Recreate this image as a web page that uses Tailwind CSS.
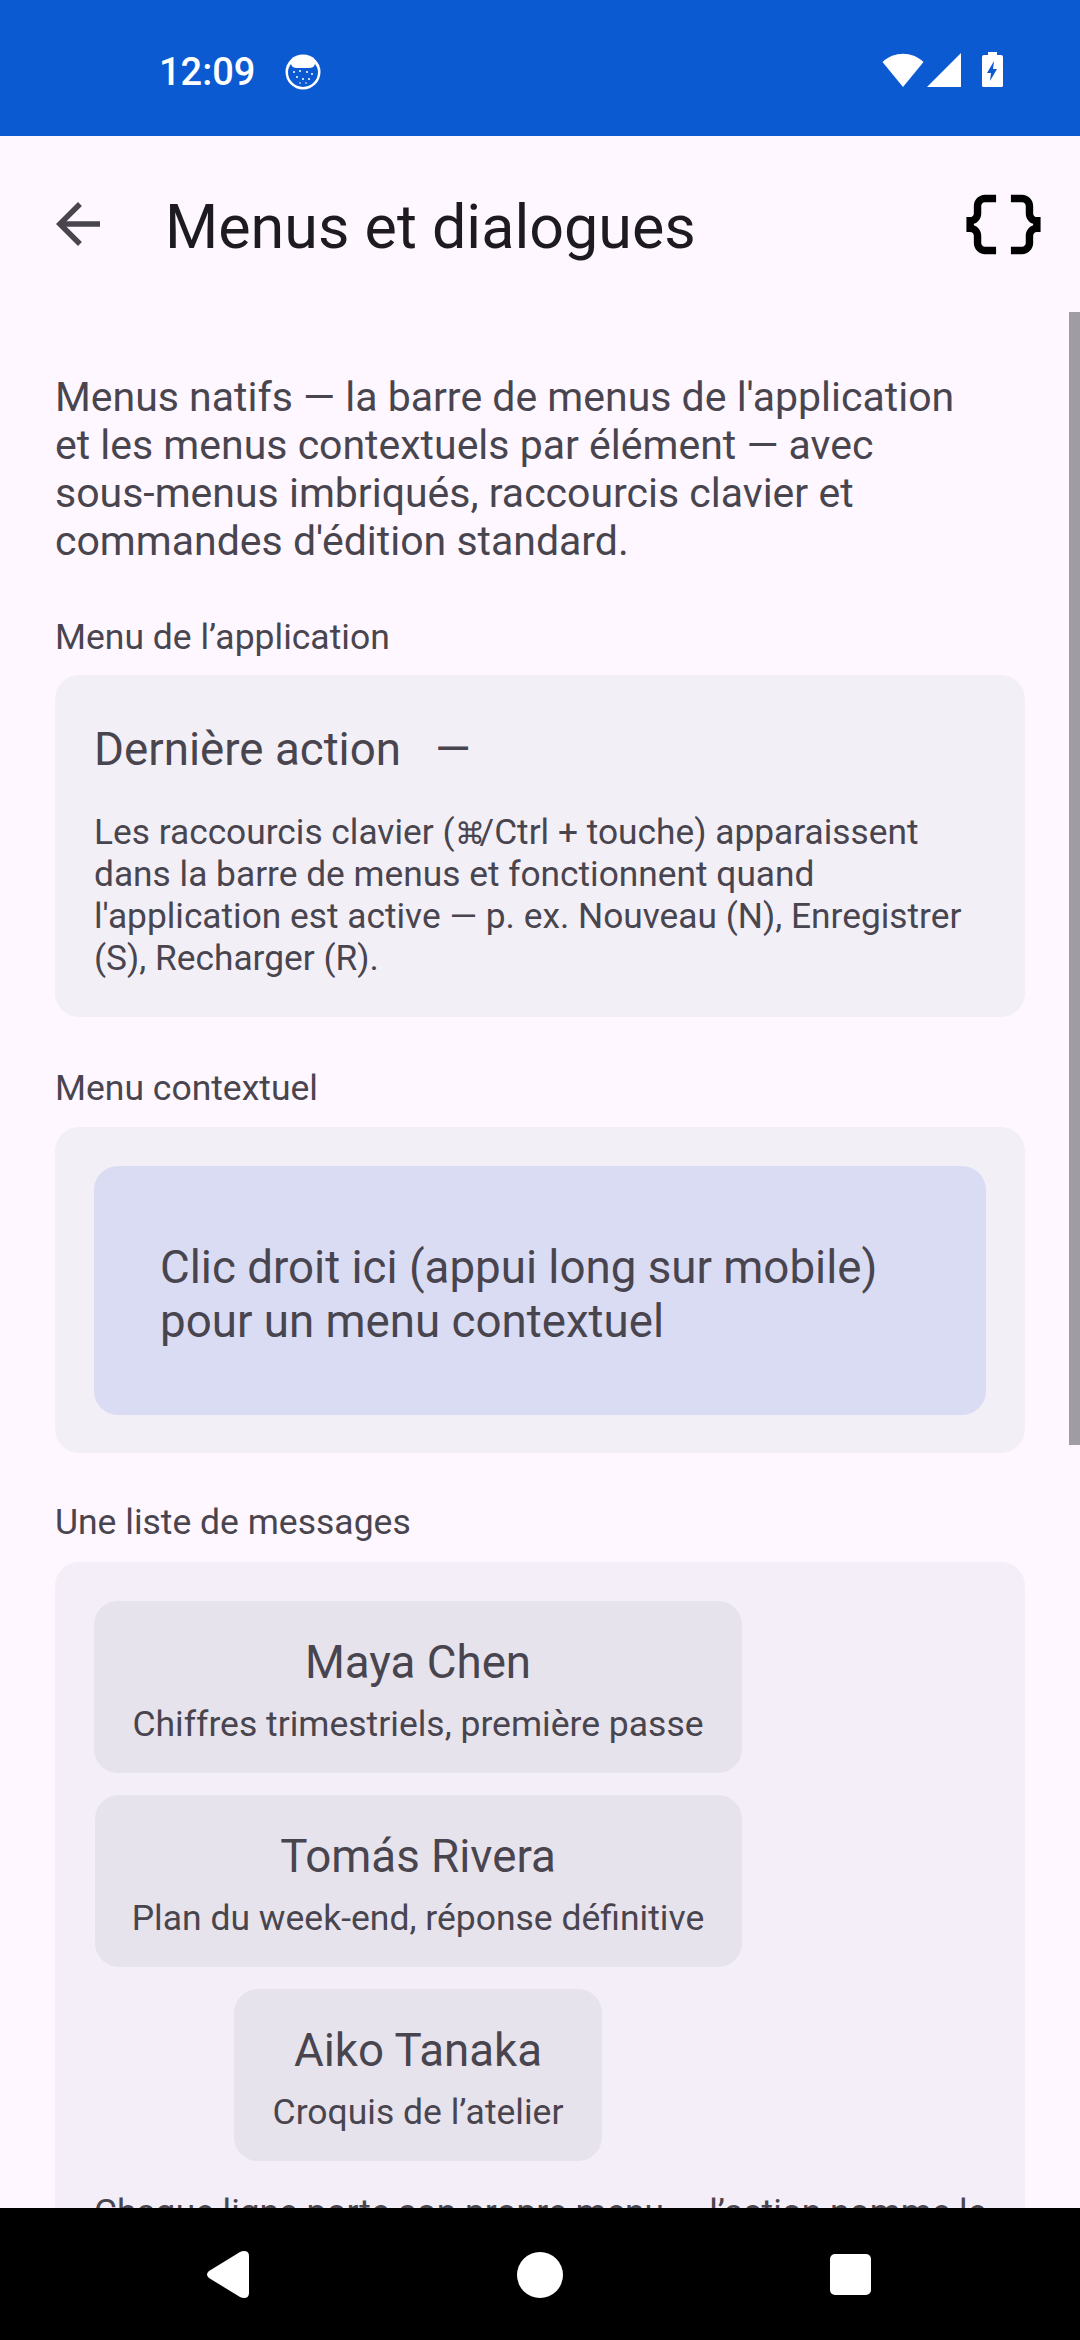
<!DOCTYPE html>
<html lang="fr">
<head>
    <meta charset="utf-8">
    <meta name="viewport" content="width=device-width, initial-scale=1">
    <title>Menus et dialogues</title>
    <script src="https://cdn.jsdelivr.net/npm/@tailwindcss/browser@4"></script>
</head>
<body class="w-[1080px] h-[2340px] overflow-hidden bg-[#fef7ff] font-['Roboto',sans-serif] text-[#49454f] relative">
    <!-- Barre d'état -->
    <div class="h-[136px] bg-[#0b5ad2] flex items-center justify-between pl-[159px] pr-[77px] text-white">
        <div class="flex items-center gap-[30px] mt-[7px]">
            <span class="text-[38px] leading-[40px] font-medium">12:09</span>
            <svg width="36" height="36" viewBox="0 0 36 36">
                <circle cx="18" cy="18" r="17.5" fill="#fff"/>
                <path d="M6 10 C7 13 9 14 12 14 H24 C27 14 29 13 30 10 C32 13 33 15 33 18 A15 15 0 0 1 3 18 C3 15 4 13 6 10 Z" fill="#0b5ad2"/>
                <g fill="#fff"><circle cx="9" cy="18" r="1"/><circle cx="15" cy="17" r="1"/><circle cx="22" cy="18" r="1"/><circle cx="27" cy="20" r="1"/><circle cx="12" cy="23" r="1"/><circle cx="18" cy="25" r="1"/><circle cx="24" cy="25" r="1"/><circle cx="15" cy="29" r="0.8"/><circle cx="21" cy="29" r="0.8"/></g>
            </svg>
        </div>
        <div class="flex items-center mt-[4px]">
            <svg width="42" height="36" viewBox="0 0 42 36"><path d="M0.5 10 C12 -1 30 -1 41.5 10 L21 35 Z" fill="#fff"/></svg>
            <svg class="ml-[3px]" width="35" height="36" viewBox="0 0 35 36"><path d="M34 1 V35 H0 Z" fill="#fff"/></svg>
            <svg class="ml-[20px]" width="21" height="36" viewBox="0 0 21 36"><path d="M6 0 H15 V3 H19 Q21 3 21 5 V34 Q21 35 19 35 H2 Q0 35 0 34 V5 Q0 3 2 3 H6 Z" fill="#fff"/><path d="M12 9 L5 21 H9 L8 29 L15 17 H11 Z" fill="#0b5ad2"/></svg>
        </div>
    </div>

    <!-- Barre d'application -->
    <header class="h-[176px] flex items-center pl-[45px] pr-[32px]">
        <svg width="66" height="66" viewBox="0 0 24 24" fill="#49454f"><path d="M20 11H7.83l5.59-5.59L12 4l-8 8 8 8 1.41-1.41L7.83 13H20v-2z"/></svg>
        <h1 class="ml-[54px] mt-[6px] text-[#1d1b20] text-[61px] leading-[64px]">Menus et dialogues</h1>
        <svg class="ml-auto" width="89" height="89" viewBox="0 0 24 24" fill="#000"><path d="M4 7v2c0 .55-.45 1-1 1H2v4h1c.55 0 1 .45 1 1v2c0 1.65 1.35 3 3 3h3v-2H7c-.55 0-1-.45-1-1v-2c0-1.3-.84-2.42-2-2.83v-.34C5.16 11.42 6 10.3 6 9V7c0-.55.45-1 1-1h3V4H7C5.35 4 4 5.35 4 7z"/><path d="M21 10c-.55 0-1-.45-1-1V7c0-1.65-1.35-3-3-3h-3v2h3c.55 0 1 .45 1 1v2c0 1.3.84 2.42 2 2.83v.34c-1.16.41-2 1.52-2 2.83v2c0 .55-.45 1-1 1h-3v2h3c1.65 0 3-1.35 3-3v-2c0-.55.45-1 1-1h1v-4h-1z"/></svg>
    </header>

    <main class="px-[55px] pt-[61px]">
        <p class="w-[900px] text-[41px] leading-[48px]">Menus natifs — la barre de menus de l'application et les menus contextuels par élément — avec sous-menus imbriqués, raccourcis clavier et commandes d'édition standard.</p>

        <h2 class="mt-[48px] text-[35.5px] leading-[48px]">Menu de l’application</h2>
        <section class="mt-[14px] bg-[#f3eff7] rounded-[24px] pt-[49px] px-[39px] h-[342px]">
            <div class="flex gap-[34px] text-[45.7px] leading-[52px]"><span>Dernière action</span><span>—</span></div>
            <p class="mt-[35px] text-[35.3px] leading-[42px]">Les raccourcis clavier (<span class="text-[30px] leading-[0] -mr-[5px]">⌘</span>/Ctrl + touche) apparaissent dans la barre de menus et fonctionnent quand l'application est active — p. ex. Nouveau (N), Enregistrer (S), Recharger (R).</p>
        </section>

        <h2 class="mt-[47px] text-[35.5px] leading-[48px]">Menu contextuel</h2>
        <section class="mt-[15px] bg-[#f3eff7] rounded-[24px] pt-[39px] px-[39px] pb-[38px]">
            <div class="bg-[#dadcf3] rounded-[24px] h-[249px] pt-[9px] flex items-center px-[66px] text-[45.7px] leading-[54px]">Clic droit ici (appui long sur mobile) pour un menu contextuel</div>
        </section>

        <h2 class="mt-[45px] text-[35.5px] leading-[48px]">Une liste de messages</h2>
        <section class="mt-[16px] bg-[#f3eef8] rounded-[24px] p-[39px] h-[800px]">
            <div class="w-[648px] flex flex-col items-center gap-[22px]">
                <div class="w-[648px] h-[172px] pt-[10px] rounded-[24px] bg-[#e7e3ed] flex flex-col items-center justify-center">
                    <span class="text-[45.7px] leading-[54px]">Maya Chen</span>
                    <span class="mt-[10px] text-[35.5px] leading-[48px]">Chiffres trimestriels, première passe</span>
                </div>
                <div class="w-[647px] h-[172px] pt-[10px] rounded-[24px] bg-[#e7e3ed] flex flex-col items-center justify-center">
                    <span class="text-[45.7px] leading-[54px]">Tomás Rivera</span>
                    <span class="mt-[10px] text-[35.5px] leading-[48px]">Plan du week-end, réponse définitive</span>
                </div>
                <div class="w-[368px] h-[172px] pt-[10px] rounded-[24px] bg-[#e7e3ed] flex flex-col items-center justify-center">
                    <span class="text-[45.7px] leading-[54px]">Aiko Tanaka</span>
                    <span class="mt-[10px] text-[35.5px] leading-[48px]">Croquis de l’atelier</span>
                </div>
            </div>
            <p class="mt-[30px] -mr-[8px] text-[35.3px] leading-[42px]">Chaque ligne porte son propre menu — l’action nomme le message.</p>
        </section>
    </main>

    <!-- Ascenseur -->
    <div class="absolute right-0 top-[312px] w-[11px] h-[1133px] bg-[#a09ca3]"></div>

    <!-- Barre de navigation -->
    <nav class="absolute left-0 bottom-0 w-full h-[132px] bg-black flex items-center">
        <svg class="absolute left-[205px] top-[43px]" width="46" height="47" viewBox="0 0 46 47"><path d="M44 5 Q44 0 39 0 Q37 0 35 1 L4 20 Q0 23.5 4 27 L35 46 Q37 47 39 47 Q44 47 44 42 Z" fill="#fff"/></svg>
        <div class="absolute left-[517px] top-[44px] w-[46px] h-[46px] rounded-full bg-white"></div>
        <div class="absolute left-[830px] top-[46px] w-[41px] h-[41px] rounded-[5px] bg-white"></div>
    </nav>
</body>
</html>
